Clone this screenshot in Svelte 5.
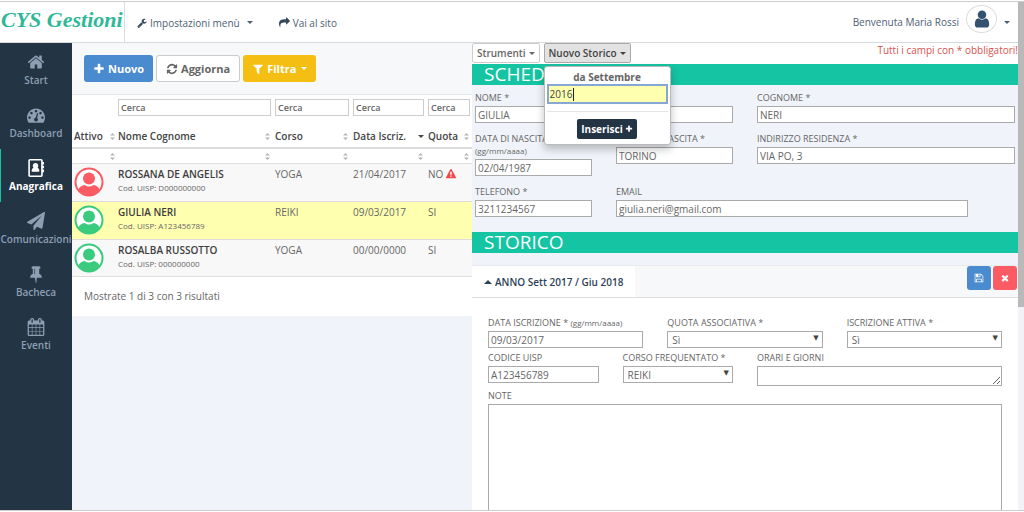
<script lang="ts">
  const icons = {
    home: 'M1472 992v480q0 26-19 45t-45 19h-384v-384h-256v384h-384q-26 0-45-19t-19-45v-480q0-1 .5-3t.5-3l575-474 575 474q1 2 1 6zm223-69l-62 74q-8 9-21 11h-3q-13 0-21-7l-692-577-692 577q-12 8-24 7-13-2-21-11l-62-74q-8-10-7-23.5t11-21.5l719-599q32-26 76-26t76 26l244 204v-195q0-14 9-23t23-9h192q14 0 23 9t9 23v408l219 182q10 8 11 21.5t-7 23.5z',
    gauge: 'M384 1152q0-53-37.5-90.5t-90.5-37.5-90.5 37.5-37.5 90.5 37.5 90.5 90.5 37.5 90.5-37.5 37.5-90.5zm192-448q0-53-37.5-90.5t-90.5-37.5-90.5 37.5-37.5 90.5 37.5 90.5 90.5 37.5 90.5-37.5 37.5-90.5zm428 481l101-382q6-26-7.5-48.5t-38.5-29.5-48 6.5-30 39.5l-101 382q-60 5-107 43.5t-63 98.5q-20 77 20 146t117 89 146-20 89-117q16-60-6-117t-72-91zm660-33q0-53-37.5-90.5t-90.5-37.5-90.5 37.5-37.5 90.5 37.5 90.5 90.5 37.5 90.5-37.5 37.5-90.5zm-640-640q0-53-37.5-90.5t-90.5-37.5-90.5 37.5-37.5 90.5 37.5 90.5 90.5 37.5 90.5-37.5 37.5-90.5zm448 192q0-53-37.5-90.5t-90.5-37.5-90.5 37.5-37.5 90.5 37.5 90.5 90.5 37.5 90.5-37.5 37.5-90.5zm320 448q0 261-141 483-19 29-54 29h-1402q-35 0-54-29-141-221-141-483 0-182 71-348t191-286 286-191 348-71 348 71 286 191 191 286 71 348z',
    book: 'M288 0h1120q66 0 113 47t47 113v128h96q32 0 32 32v192q0 32-32 32h-96v128h96q32 0 32 32v192q0 32-32 32h-96v128h96q32 0 32 32v192q0 32-32 32h-96v320q0 66-47 113t-113 47h-1120q-66 0-113-47t-47-113v-1472q0-66 47-113t113-47zm0 160v1472h1120v-1472zm560 240q115 0 193 78t78 193q0 133-79 211 175 55 202 290 8 108-98 108h-592q-106 0-98-108 27-235 202-290-79-78-79-211 0-115 78-193t193-78z',
    plane: 'M1764 11q33 24 27 64l-256 1536q-5 29-32 45-14 8-31 8-11 0-24-5l-453-185-242 295q-18 23-49 23-13 0-22-4-19-7-30.5-23.5t-11.5-36.5v-349l864-1059-1069 925-395-162q-37-14-40-55-2-40 32-59l1664-960q15-9 32-9 20 0 36 11z',
    pin: 'M800 864v-448q0-14-9-23t-23-9-23 9-9 23v448q0 14 9 23t23 9 23-9 9-23zm672 352q0 26-19 45t-45 19h-429l-51 483q-2 12-10.5 20.5t-20.5 8.5h-1q-27 0-32-27l-76-485h-404q-26 0-45-19t-19-45q0-123 78.5-221.5t177.5-98.5v-512q-52 0-90-38t-38-90 38-90 90-38h640q52 0 90 38t38 90-38 90-90 38v512q99 0 177.5 98.5t78.5 221.5z',
    calendar: 'M192 1664h288v-288h-288v288zm352 0h320v-288h-320v288zm-352-352h288v-320h-288v320zm352 0h320v-320h-320v320zm-352-384h288v-288h-288v288zm736 736h320v-288h-320v288zm-384-736h320v-288h-320v288zm768 736h288v-288h-288v288zm-384-352h320v-320h-320v320zm-352-864v-288q0-13-9.5-22.5t-22.5-9.5h-64q-13 0-22.5 9.5t-9.5 22.5v288q0 13 9.5 22.5t22.5 9.5h64q13 0 22.5-9.5t9.5-22.5zm736 864h288v-320h-288v320zm-384-384h320v-288h-320v288zm384 0h288v-288h-288v288zm32-480v-288q0-13-9.5-22.5t-22.5-9.5h-64q-13 0-22.5 9.5t-9.5 22.5v288q0 13 9.5 22.5t22.5 9.5h64q13 0 22.5-9.5t9.5-22.5zm384-64v1280q0 52-38 90t-90 38h-1408q-52 0-90-38t-38-90v-1280q0-52 38-90t90-38h128v-96q0-66 47-113t113-47h64q66 0 113 47t47 113v96h384v-96q0-66 47-113t113-47h64q66 0 113 47t47 113v96h128q52 0 90 38t38 90z',
    wrench: 'M448 1472q0-26-19-45t-45-19-45 19-19 45 19 45 45 19 45-19 19-45zm644-420l-682 682q-37 37-90 37-52 0-91-37l-106-108q-38-36-38-90 0-53 38-91l681-681q39 98 114.5 173.5t173.5 114.5zm634-435q0 39-23 106-47 134-164.5 217.5t-258.5 83.5q-185 0-316.5-131.5t-131.5-316.5 131.5-316.5 316.5-131.5q58 0 121.5 16.5t107.5 46.5q16 11 16 28t-16 28l-293 169v224l193 107q5-3 79-48.5t135.5-81 70.5-35.5q15 0 23.5 10t8.5 25z',
    share: 'M1792 640q0 26-19 45l-512 512q-19 19-45 19t-45-19-19-45v-256h-224q-98 0-175.5 6t-154 21.5-133 42.5-105.5 69.5-80 101-48.5 138.5-17.5 181q0 55 5 123 0 6 2.5 23.5t2.5 26.5q0 15-8.5 25t-23.5 10q-16 0-28-17-7-9-13-22t-13.5-30-10.5-24q-127-285-127-451 0-199 53-333 162-403 875-403h224v-256q0-26 19-45t45-19 45 19l512 512q19 19 19 45z',
    user: 'M1536 1399q0 109-62.5 187t-150.5 78h-854q-88 0-150.5-78t-62.5-187q0-85 8.5-160.5t31.5-152 58.5-131 94-89 134.5-34.5q131 128 313 128t313-128q76 0 134.5 34.5t94 89 58.5 131 31.5 152 8.5 160.5zm-256-887q0 159-112.5 271.5t-271.5 112.5-271.5-112.5-112.5-271.5 112.5-271.5 271.5-112.5 271.5 112.5 112.5 271.5z',
    refresh: 'M1639 1056q0 5-1 7-64 268-268 434.5t-478 166.5q-146 0-282.5-55t-243.5-157l-129 129q-19 19-45 19t-45-19-19-45v-448q0-26 19-45t45-19h448q26 0 45 19t19 45-19 45l-137 137q71 66 161 102t187 36q134 0 250-65t186-179q11-17 53-117 8-23 30-23h192q13 0 22.5 9.5t9.5 22.5zm25-800v448q0 26-19 45t-45 19h-448q-26 0-45-19t-19-45 19-45l138-138q-148-137-349-137-134 0-250 65t-186 179q-11 17-53 117-8 23-30 23h-199q-13 0-22.5-9.5t-9.5-22.5v-7q65-268 270-434.5t480-166.5q146 0 284 55.5t245 156.5l130-129q19-19 45-19t45 19 19 45z',
    plus: 'M1600 736v192q0 40-28 68t-68 28h-416v416q0 40-28 68t-68 28h-192q-40 0-68-28t-28-68v-416h-416q-40 0-68-28t-28-68v-192q0-40 28-68t68-28h416v-416q0-40 28-68t68-28h192q40 0 68 28t28 68v416h416q40 0 68 28t28 68z',
    filter: 'M1595 295q17 41-14 70l-493 493v742q0 42-39 59-13 5-25 5-27 0-45-19l-256-256q-19-19-19-45v-486l-493-493q-31-29-14-70 17-39 59-39h1280q42 0 59 39z',
    times: 'M1490 1322q0 40-28 68l-136 136q-28 28-68 28t-68-28l-294-294-294 294q-28 28-68 28t-68-28l-136-136q-28-28-28-68t28-68l294-294-294-294q-28-28-28-68t28-68l136-136q28-28 68-28t68 28l294 294 294-294q28-28 68-28t68 28l136 136q28 28 28 68t-28 68l-294 294 294 294q28 28 28 68z',
    save: 'M512 1536h768v-384h-768v384zm896 0h128v-896q0-14-10-38.5t-20-34.5l-281-281q-10-10-34-20t-39-10v416q0 40-28 68t-68 28h-576q-40 0-68-28t-28-68v-416h-128v1280h128v-416q0-40 28-68t68-28h832q40 0 68 28t28 68v416zm-384-928v-320q0-13-9.5-22.5t-22.5-9.5h-192q-13 0-22.5 9.5t-9.5 22.5v320q0 13 9.5 22.5t22.5 9.5h192q13 0 22.5-9.5t9.5-22.5zm640 32v928q0 40-28 68t-68 28h-1344q-40 0-68-28t-28-68v-1344q0-40 28-68t68-28h928q40 0 88 20t76 48l280 280q28 28 48 76t20 88z',
    warning: 'M1024 1375v-190q0-14-9.5-23.5t-22.5-9.5h-192q-13 0-22.5 9.5t-9.5 23.5v190q0 14 9.5 23.5t22.5 9.5h192q13 0 22.5-9.5t9.5-23.5zm-2-374l18-459q0-12-10-19-13-11-24-11h-220q-11 0-24 11-10 7-10 21l17 457q0 10 10 16.5t24 6.5h185q14 0 23.5-6.5t10.5-16.5zm-14-934l768 1408q35 63-2 126-17 29-46.5 46t-63.5 17h-1536q-34 0-63.5-17t-46.5-46q-37-63-2-126l768-1408q17-31 47-49t65-18 65 18 47 49z'
  };
  type IconName = keyof typeof icons;

  const nav: { label: string; icon: IconName; active?: boolean }[] = [
    { label: 'Start', icon: 'home' },
    { label: 'Dashboard', icon: 'gauge' },
    { label: 'Anagrafica', icon: 'book', active: true },
    { label: 'Comunicazioni', icon: 'plane' },
    { label: 'Bacheca', icon: 'pin' },
    { label: 'Eventi', icon: 'calendar' }
  ];

  const columns = [
    { label: 'Attivo', search: false, sorted: false },
    { label: 'Nome Cognome', search: true, sorted: false },
    { label: 'Corso', search: true, sorted: false },
    { label: 'Data Iscriz.', search: true, sorted: true },
    { label: 'Quota', search: true, sorted: false }
  ];

  const people = [
    { name: 'ROSSANA DE ANGELIS', code: 'D000000000', course: 'YOGA', date: '21/04/2017', paid: false, active: false },
    { name: 'GIULIA NERI', code: 'A123456789', course: 'REIKI', date: '09/03/2017', paid: true, active: true },
    { name: 'ROSALBA RUSSOTTO', code: '000000000', course: 'YOGA', date: '00/00/0000', paid: true, active: true }
  ];
  let selected = $state(1);
</script>

{#snippet icon(name: IconName, size: number)}
  <svg class="icon" width={size} height={size} viewBox="0 0 1792 1792" aria-hidden="true"><path fill-rule={name === 'book' ? 'evenodd' : 'nonzero'} d={icons[name]} /></svg>
{/snippet}

{#snippet sorter()}
  <svg class="sorter" width="7" height="9" viewBox="0 0 7 9" aria-hidden="true"><path d="M1 3.500L3.500 1L6 3.500ZM1 5.500L3.500 8L6 5.500Z" /></svg>
{/snippet}

<div class="app">
  <div class="page">
    <header>
      <a class="logo" href="#top">CYS Gestioni</a>
      <button class="top-link">{@render icon('wrench', 10)} Impostazioni menù <i class="caret"></i></button>
      <a class="top-link site" href="#site">{@render icon('share', 11)} Vai al sito</a>
      <button class="account">
        Benvenuta Maria Rossi
        <span class="avatar">{@render icon('user', 20)}</span>
        <i class="caret"></i>
      </button>
    </header>

    <div class="body">
      <nav>
        {#each nav as item}
          <a href="#{item.label}" class:active={item.active}>
            {@render icon(item.icon, 18)}
            <span>{item.label}</span>
          </a>
        {/each}
      </nav>

      <section class="list">
        <div class="toolbar">
          <button class="btn blue">{@render icon('plus', 12)} Nuovo</button>
          <button class="btn plain">{@render icon('refresh', 12)} Aggiorna</button>
          <button class="btn yellow">{@render icon('filter', 12)} Filtra <i class="caret"></i></button>
        </div>
        <div class="sheet">
          <table>
            <colgroup>
              <col class="c-active" /><col /><col class="c-course" /><col class="c-date" /><col class="c-paid" />
            </colgroup>
            <thead>
              <tr class="search">
                {#each columns as col}
                  <td>{#if col.search}<input type="text" placeholder="Cerca" aria-label="Cerca {col.label}" />{/if}</td>
                {/each}
              </tr>
              <tr class="titles">
                {#each columns as col}
                  <th><div class="head">{col.label}{#if col.sorted}<i class="caret"></i>{:else}{@render sorter()}{/if}</div></th>
                {/each}
              </tr>
              <tr class="sorts">
                {#each columns as col}
                  <td><div class="head">{@render sorter()}</div></td>
                {/each}
              </tr>
            </thead>
            <tbody>
              {#each people as p, i}
                <tr class:selected={selected === i} onclick={() => (selected = i)}>
                  <td>
                    <svg class="face" class:on={p.active} width="30" height="30" viewBox="0 0 30 30" role="img" aria-label={p.active ? 'Attivo' : 'Non attivo'}>
                      <circle class="ring" cx="15" cy="15" r="13.5" />
                      <circle cx="15" cy="11.5" r="6" />
                      <path d="M4.5 22.5Q6 18.6 10.6 18Q15 21 19.400 18Q24 18.600 25.500 22.500Q21.500 28.400 15 28.400T4.500 22.500Z" />
                    </svg>
                  </td>
                  <td><b>{p.name}</b><small>Cod. UISP: {p.code}</small></td>
                  <td>{p.course}</td>
                  <td>{p.date}</td>
                  <td>{#if p.paid}SI{:else}NO <span class="alert">{@render icon('warning', 10)}</span>{/if}</td>
                </tr>
              {/each}
            </tbody>
          </table>
          <p class="count">Mostrate 1 di 3 con 3 risultati</p>
        </div>
      </section>

      <main>
        <div class="actions">
          <button class="tool">Strumenti <i class="caret"></i></button>
          <div class="menu-anchor">
            <button class="tool open">Nuovo Storico <i class="caret"></i></button>
            <div class="menu">
              <label for="from-year">da Settembre</label>
              <div class="year">
                <input id="from-year" type="text" value="2016" />
                <i class="cursor"></i>
              </div>
              <div class="confirm"><button>Inserisci {@render icon('plus', 8)}</button></div>
            </div>
          </div>
          <span class="required">Tutti i campi con * obbligatori!</span>
        </div>

        <h2>SCHEDA</h2>
        <form class="grid card">
          <div class="field s6"><label for="nome">NOME *</label><input id="nome" value="GIULIA" /></div>
          <div class="field s6"><label for="cognome">COGNOME *</label><input id="cognome" value="NERI" /></div>
          <div class="field s3"><label for="nascita">DATA DI NASCITA * <small>(gg/mm/aaaa)</small></label><input id="nascita" value="02/04/1987" /></div>
          <div class="field s3"><label for="luogo">LUOGO DI NASCITA *</label><input id="luogo" value="TORINO" /></div>
          <div class="field s6"><label for="indirizzo">INDIRIZZO RESIDENZA *</label><input id="indirizzo" value="VIA PO, 3" /></div>
          <div class="field s3"><label for="telefono">TELEFONO *</label><input id="telefono" value="3211234567" /></div>
          <div class="field s8"><label for="email">EMAIL</label><input id="email" type="email" value="giulia.neri@gmail.com" /></div>
        </form>

        <h2>STORICO</h2>
        <div class="panel">
          <div class="panel-head">
            <button class="tab"><i class="caret up"></i> ANNO Sett 2017 / Giu 2018</button>
            <div class="panel-actions">
              <button class="square blue" aria-label="Salva">{@render icon('save', 10)}</button>
              <button class="square red" aria-label="Elimina">{@render icon('times', 10)}</button>
            </div>
          </div>
          <form class="grid history">
            <div class="field s4"><label for="iscrizione">DATA ISCRIZIONE * <small>(gg/mm/aaaa)</small></label><input id="iscrizione" value="09/03/2017" /></div>
            <div class="field s4"><label for="quota">QUOTA ASSOCIATIVA *</label><div class="select"><select id="quota"><option>Sì</option><option>No</option></select></div></div>
            <div class="field s4"><label for="attiva">ISCRIZIONE ATTIVA *</label><div class="select"><select id="attiva"><option>Sì</option><option>No</option></select></div></div>
            <div class="field s3"><label for="uisp">CODICE UISP</label><input id="uisp" value="A123456789" /></div>
            <div class="field s3"><label for="corso">CORSO FREQUENTATO *</label><div class="select"><select id="corso"><option>REIKI</option><option>YOGA</option></select></div></div>
            <div class="field s6"><label for="orari">ORARI E GIORNI</label><textarea id="orari" class="short"></textarea></div>
            <div class="field s12"><label for="note">NOTE</label><textarea id="note" class="long"></textarea></div>
          </form>
        </div>
      </main>
    </div>
  </div>
  <div class="scrollbar"><div class="thumb"></div></div>
</div>

<style>
  :global(body) { margin: 0; background: #fff; }
  .app, .app * { box-sizing: border-box; }
  .app {
    display: flex;
    height: 100vh;
    padding: 1px 0;
    overflow: hidden;
    font: 10px/14px "Open Sans", sans-serif;
    color: #666;
  }
  .page { flex: 1; min-width: 0; display: flex; flex-direction: column; border-top: 1px solid #ccc; border-bottom: 1px solid #ccc; }
  .scrollbar { width: 6px; background: #f1f3f7; border-top: 1px solid #ccc; border-bottom: 1px solid #ccc; }
  .thumb { height: 60%; background: #b9b9b9; }
  button, input, select, textarea { font: inherit; color: inherit; margin: 0; padding: 0; border: 0; background: none; border-radius: 0; }
  a { color: inherit; text-decoration: none; }
  .icon { fill: currentColor; flex: none; }
  .caret { display: inline-block; border: 3px solid transparent; border-top-color: currentColor; border-bottom: 0; }
  .caret.up { border-top: 0; border-bottom: 4px solid currentColor; border-left-width: 4px; border-right-width: 4px; }

  header { display: flex; align-items: center; height: 41px; border-bottom: 1px solid #d6d9dd; flex: none; color: #4d6073; }
  .logo { width: 125px; height: 40px; padding-left: 1px; border-right: 1px solid #ddd; font: italic bold 22px/36px "Liberation Serif", serif; color: #2fb898; white-space: nowrap; }
  .top-link { display: flex; align-items: center; gap: 3px; margin-left: 12px; font-size: 10px; padding-top: 1px; }
  .top-link .icon { color: #34495e; }
  .top-link .caret { margin-left: 4px; }
  .site { margin-left: 26px; }
  .account { display: flex; align-items: center; gap: 7px; margin-left: auto; padding-right: 8px; }
  .avatar { display: flex; align-items: center; justify-content: center; width: 31px; height: 28px; border: 1px solid #ddd; border-radius: 50%; color: #34526f; margin-bottom: 6px; }

  .body { flex: 1; min-height: 0; display: grid; grid-template-columns: 72px minmax(0, 400fr) minmax(0, 546fr); overflow: hidden; }
  nav { background: #233445; color: #8d9fb3; font-weight: 600; }
  nav a { display: flex; flex-direction: column; align-items: center; height: 53px; padding-top: 10px; gap: 2px; }
  nav a.active { color: #fff; font-weight: 700; box-shadow: inset 1px 0 #14c4a2; }

  .list { background: #f0f3f9; overflow: hidden; }
  .toolbar { display: flex; gap: 3px; padding: 12px; height: 52px; background: #f7f8fa; border-bottom: 1px solid #e4e8ee; }
  .btn { display: flex; align-items: center; gap: 3px; height: 27px; padding: 0 9px; border-radius: 3px; font-size: 11px; font-weight: 700; white-space: nowrap; color: #fff; }
  .blue { background: #4a8bd0; }
  .yellow { background: #f4bf12; }
  .red { background: #fb5b62; }
  .plain { background: #fff; border: 1px solid #ccc; color: #666; }
  .btn .caret { margin-left: 2px; }
  .sheet { background: #fff; }
  table { width: 100%; table-layout: fixed; border-collapse: separate; border-spacing: 0; }
  .c-active { width: 44px; } .c-course { width: 78px; } .c-date { width: 75px; } .c-paid { width: 46px; }
  td, th { padding: 0 2px; text-align: left; vertical-align: top; white-space: nowrap; }
  td:first-child, th:first-child { padding-right: 0; }
  .search td { padding-top: 4px; height: 28px; }
  .search input { display: block; width: 100%; height: 17px; border: 1px solid #ccc; font-size: 9px; font-weight: 600; padding: 0 2px; }
  .search input::placeholder { color: #666; opacity: 1; }
  .titles th { height: 26px; padding-top: 6px; font-weight: 600; border-bottom: 2px solid #ddd; color: #444; }
  .sorts td { height: 14px; padding-top: 3px; }
  .head { display: flex; justify-content: space-between; align-items: center; }
  .sorts .head { justify-content: flex-end; }
  .sorter { fill: #b5b5b5; }
  tbody td { height: 38px; padding-top: 3px; border-top: 1px solid #ddd; background: #f8f8f8; }
  tbody tr:last-child td { border-bottom: 1px solid #ddd; }
  tbody .selected td { background: #ffffb0; }
  tbody b { display: block; color: #3d3d3d; font-weight: 600; }
  tbody small { display: block; font-size: 8px; }
  .face { display: block; fill: #fb5b62; }
  .face.on { fill: #3acb7e; }
  .face .ring { fill: #fff; stroke: #fb5b62; stroke-width: 2; }
  .face.on .ring { stroke: #3acb7e; }
  .alert { color: #ef4a48; }
  .alert .icon { vertical-align: -1px; }
  .count { margin: 0; padding: 12px 12px 13px; }

  main { background: #f0f3f9; overflow: hidden; }
  .actions { display: flex; gap: 4px; height: 21px; background: #fff; }
  .tool { display: flex; align-items: center; gap: 3px; height: 20px; padding: 0 4px; border: 1px solid #ccc; border-radius: 2px; font-weight: 600; white-space: nowrap; }
  .tool.open { background: #e2e2e2; border-color: #aaa; color: #444; }
  .required { margin-left: auto; color: #d9534f; white-space: nowrap; }
  .menu-anchor { position: relative; }
  .menu { position: absolute; z-index: 2; top: 23px; left: 0; width: 127px; height: 79px; padding: 3px 2px; background: #fff; border: 1px solid #bbb; border-radius: 3px; box-shadow: 0 4px 8px rgba(0, 0, 0, .25); }
  .menu label { display: block; text-align: center; font-weight: 700; }
  .year { position: relative; }
  .year input { display: block; width: 100%; height: 20px; padding: 0 1px; border: 2px solid #86a7d3; background: #ffffb0; color: #444; }
  .cursor { position: absolute; left: 26px; top: 4px; width: 1px; height: 13px; background: #222; }
  .confirm { display: flex; justify-content: center; margin-top: 7px; padding-top: 7px; border-top: 1px solid #e5e5e5; }
  .confirm button { display: flex; align-items: center; gap: 2px; height: 20px; padding: 0 4px; border-radius: 2px; background: #233445; color: #fff; font-weight: 700; }

  h2 { margin: 0; height: 21px; padding-left: 12px; background: #14c4a2; color: #fff; font-size: 19px; line-height: 21px; font-weight: 400; }
  .grid { display: grid; grid-template-columns: repeat(12, minmax(0, 1fr)); column-gap: 24px; align-items: start; }
  .card { padding: 5px 3px 15px; row-gap: 8px; }
  .s3 { grid-column: span 3; } .s4 { grid-column: span 4; } .s6 { grid-column: span 6; } .s8 { grid-column: span 8; } .s12 { grid-column: span 12; }
  .field { display: flex; flex-direction: column; }
  .field label { font-size: 9px; line-height: 12px; padding: 2px 0; }
  .field small { font-size: 8px; white-space: nowrap; }
  .field input, select, textarea { width: 100%; height: 17px; border: 1px solid #aaa; background: #fff; padding: 0 2px; }
  .select { position: relative; }
  select { display: block; appearance: none; padding: 0 4px; }
  .select::after { content: "▼"; position: absolute; right: 4px; top: 0; font: 7px/14px "DejaVu Sans", sans-serif; color: #444; pointer-events: none; }
  textarea { display: block; }
  .short { height: 20px; }
  .long { height: 240px; }
  .panel { margin-top: 12px; background: #fff; }
  .panel-head { display: flex; height: 33px; background: #f7f8fa; border-top: 1px solid #e6e9ee; border-bottom: 1px solid #ddd; }
  .tab { display: flex; align-items: center; gap: 3px; padding: 0 12px; background: #fff; color: #2c4157; font-weight: 600; white-space: nowrap; }
  .panel-actions { display: flex; gap: 2px; margin-left: auto; padding-right: 1px; }
  .square { display: flex; align-items: center; justify-content: center; width: 24px; height: 24px; border-radius: 3px; color: #fff; }
  .history { padding: 17px 16px; row-gap: 2px; }
</style>
